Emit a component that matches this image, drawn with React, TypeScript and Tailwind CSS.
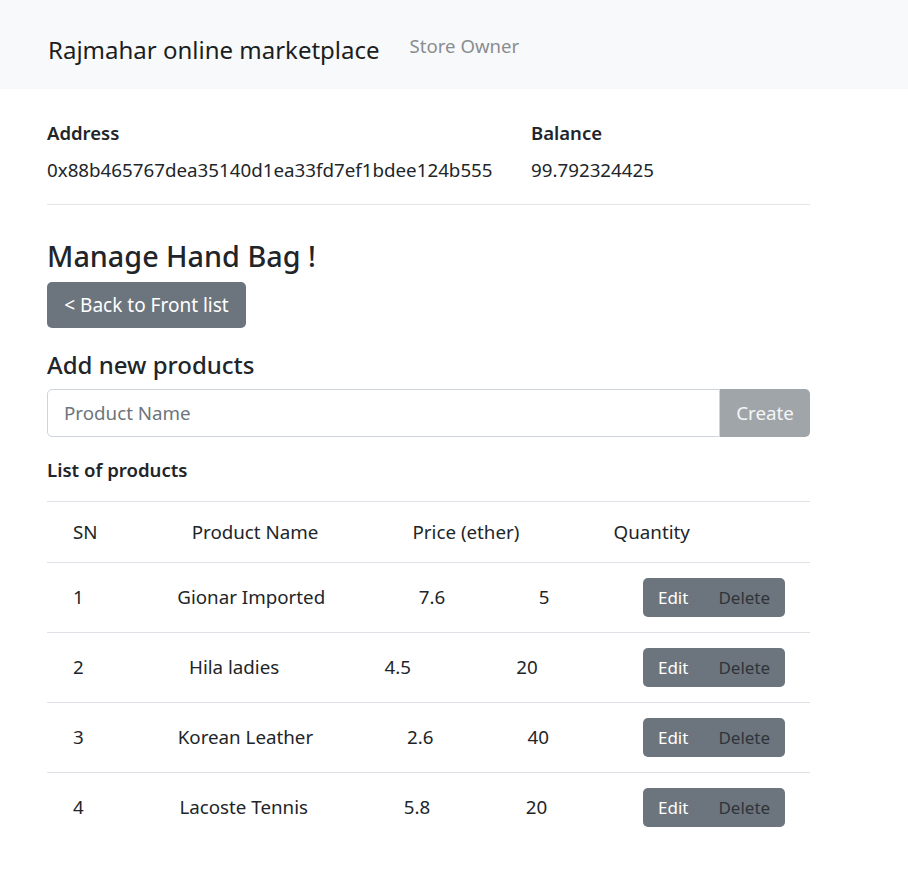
import React from "react";

const rows = [
  { sn: "1", name: "Gionar Imported", price: "7.6", qty: "5" },
  { sn: "2", name: "Hila ladies", price: "4.5", qty: "20" },
  { sn: "3", name: "Korean Leather", price: "2.6", qty: "40" },
  { sn: "4", name: "Lacoste Tennis", price: "5.8", qty: "20" },
];

export default function App() {
  return (
    <div className="min-h-[872px] bg-white text-[#212529] font-['Noto_Sans',sans-serif]">
      <nav className="h-[89px] bg-[#f8f9fa] flex items-start px-[48px]">
        <span className="mt-[34px] text-[24px] leading-[32px] text-[#1b1e21]">Rajmahar online marketplace</span>
        <span className="ml-[30px] mt-[32px] text-[18.6px] leading-[28px] text-[#8a8d90]">Store Owner</span>
      </nav>
      <div className="w-[763px] ml-[47px]">
        <div className="flex mt-[30px]">
          <div className="w-[484px]">
            <div className="text-[18.5px] leading-[28px] font-semibold">Address</div>
            <div className="mt-[9px] text-[18.75px] leading-[28px]">0x88b465767dea35140d1ea33fd7ef1bdee124b555</div>
          </div>
          <div>
            <div className="text-[18.5px] leading-[28px] font-semibold">Balance</div>
            <div className="mt-[9px] text-[18.75px] leading-[28px]">99.792324425</div>
          </div>
        </div>
        <div className="mt-[20px] border-t border-[#e5e5e5]" />
        <h3 className="mt-[31px] text-[28.75px] leading-[40px] font-medium">Manage Hand Bag !</h3>
        <button className="mt-[6px] h-[46px] w-[199px] rounded-[5px] bg-[#6c757d] text-white text-[19px] flex items-center justify-center">
          &lt; Back to Front list
        </button>
        <h4 className="mt-[20px] text-[24px] leading-[34px] font-medium">Add new products</h4>
        <div className="mt-[7px] flex h-[48px]">
          <div className="flex-1 border border-[#ced4da] rounded-l-[5px] flex items-center pl-[16px] text-[18.75px] text-[#6c757d]">
            Product Name
          </div>
          <button className="w-[90px] bg-[#a0a5aa] rounded-r-[5px] text-[#f4f5f6] text-[18.75px] flex items-center justify-center">
            Create
          </button>
        </div>
        <div className="mt-[19px] text-[18.6px] leading-[28px] font-semibold">List of products</div>
        <div className="mt-[17px]">
          <div className="h-[61px] border-t border-[#dee2e6] flex items-center justify-between px-[26px] text-[18.75px]">
            <span>SN</span>
            <span>Product Name</span>
            <span>Price (ether)</span>
            <span>Quantity</span>
            <span className="w-0" />
          </div>
          {rows.map((r) => (
            <div
              key={r.sn}
              className="h-[70px] border-t border-[#dee2e6] flex items-center justify-between pl-[26px] pr-[25px] text-[18.75px]"
            >
              <span>{r.sn}</span>
              <span>{r.name}</span>
              <span>{r.price}</span>
              <span>{r.qty}</span>
              <div className="flex h-[39px] w-[142px] rounded-[5px] bg-[#6c757d] text-[17px]">
                <span className="flex items-center pl-[15px] pr-[14px] text-white">Edit</span>
                <span className="flex items-center pl-[16px] text-[#2f343a]">Delete</span>
              </div>
            </div>
          ))}
        </div>
      </div>
    </div>
  );
}
